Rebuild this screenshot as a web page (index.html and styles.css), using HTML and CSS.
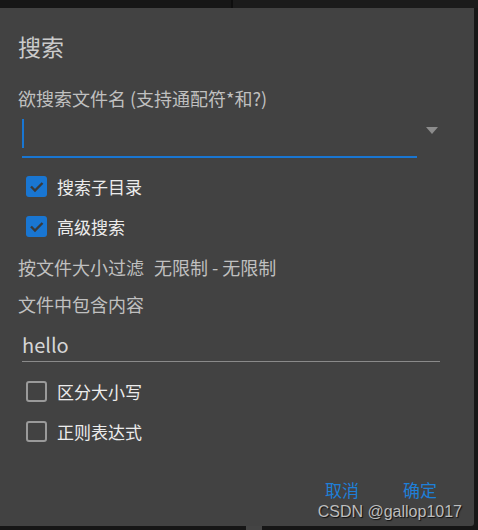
FILE: index.html
```html
<!DOCTYPE html>
<html lang="zh-CN">
<head>
  <meta charset="UTF-8">
  <title>搜索</title>
  <link rel="stylesheet" href="styles.css">
</head>
<body>
  <div class="top-strip">
    <div class="top-left"></div>
    <div class="top-right"></div>
  </div>

  <!-- Search dialog -->
  <div class="dialog">
    <div class="title">搜索</div>

    <div class="label">欲搜索文件名 (支持通配符*和?)</div>
    <div class="combo">
      <div class="combo-field"><span class="caret"></span></div>
      <div class="combo-arrow"></div>
    </div>

    <div class="check-row">
      <span class="box checked">
        <svg viewBox="0 0 21 21" width="21" height="21"><path d="M5 10.5 L9 14.5 L16.5 7" fill="none" stroke="#3a3a3a" stroke-width="2.4"/></svg>
      </span>
      <span class="check-text">搜索子目录</span>
    </div>
    <div class="check-row">
      <span class="box checked">
        <svg viewBox="0 0 21 21" width="21" height="21"><path d="M5 10.5 L9 14.5 L16.5 7" fill="none" stroke="#3a3a3a" stroke-width="2.4"/></svg>
      </span>
      <span class="check-text">高级搜索</span>
    </div>

    <div class="label size-filter">按文件大小过滤<span class="range">无限制<span class="dash">-</span>无限制</span></div>
    <div class="label content-label">文件中包含内容</div>
    <div class="text-field">hello</div>

    <div class="check-row first-plain">
      <span class="box"></span>
      <span class="check-text">区分大小写</span>
    </div>
    <div class="check-row">
      <span class="box"></span>
      <span class="check-text">正则表达式</span>
    </div>

    <div class="actions">
      <button class="btn">取消</button>
      <button class="btn">确定</button>
    </div>

    <div class="watermark">CSDN @gallop1017</div>
  </div>

  <div class="bottom-strip"><div class="bottom-tab"></div></div>
</body>
</html>
```

FILE: styles.css
```css
/* General */
body {
  margin: 0;
  background: #171717;
  font-family: "Noto Sans CJK SC", "Noto Sans", sans-serif;
  width: 478px;
  height: 530px;
  overflow: hidden;
}

.top-strip {
  display: flex;
  height: 8px;
}

.top-left {
  width: 231px;
  background: #161616;
  border-right: 2px solid #0e0e0e;
}

.top-right {
  flex: 1;
  background: #1b1b1b;
}

/* Dialog */
.dialog {
  position: relative;
  box-sizing: border-box;
  width: 474px;
  height: 518px;
  padding: 18px 0 0 18px;
  background: #424242;
  border-radius: 0 0 3px 0;
}

.title {
  height: 40px;
  line-height: 40px;
  font-size: 23px;
  color: #cbcbcb;
}

.label {
  margin-top: 20px;
  height: 24px;
  line-height: 24px;
  font-size: 18px;
  color: #c0c0c0;
}

.range {
  margin-left: 10px;
}

.dash {
  margin: 0 4px;
}

/* File name combo */
.combo {
  display: flex;
  align-items: center;
  margin-top: 6px;
  margin-left: 4px;
}

.combo-field {
  width: 395px;
  height: 40px;
  border-bottom: 2px solid #1976d2;
  display: flex;
  align-items: center;
}

.caret {
  width: 2px;
  height: 29px;
  background: #1976d2;
  margin-top: -6px;
}

.combo-arrow {
  width: 0;
  height: 0;
  margin-left: 9px;
  margin-top: -14px;
  border-left: 6px solid transparent;
  border-right: 6px solid transparent;
  border-top: 7px solid #8c8c8c;
}

/* Checkboxes */
.check-row {
  display: flex;
  align-items: center;
  height: 40px;
  padding-left: 8px;
}

.combo + .check-row {
  margin-top: 8px;
}

.box {
  box-sizing: border-box;
  width: 21px;
  height: 21px;
  border: 2px solid #9a9a9a;
  border-radius: 3px;
  display: flex;
}

.box.checked {
  border: none;
  background: #1976d2;
}

.check-text {
  margin-left: 10px;
  font-size: 17px;
  color: #ececec;
}

.size-filter {
  margin-top: 9px;
}

.content-label {
  margin-top: 13px;
}

/* Content text field */
.text-field {
  margin: 12px 0 0 4px;
  width: 418px;
  height: 33px;
  line-height: 33px;
  font-size: 20px;
  color: #d6d6d6;
  border-bottom: 1px solid #8a8a8a;
}

.first-plain {
  margin-top: 9px;
}

/* Buttons */
.actions {
  display: flex;
  justify-content: flex-end;
  gap: 44px;
  margin-top: 20px;
  padding-right: 37px;
  height: 36px;
  align-items: center;
}

.btn {
  background: none;
  border: none;
  padding: 0;
  font-family: inherit;
  font-size: 17px;
  color: #1e7fd8;
}

.watermark {
  position: absolute;
  right: 12px;
  bottom: 5px;
  font-family: "Liberation Sans", sans-serif;
  font-size: 16px;
  color: #bdbdbd;
  text-shadow: 1px 1px 1px #111;
}

.bottom-strip {
  height: 4px;
  background: #161616;
  display: flex;
}

.bottom-tab {
  margin-left: 246px;
  width: 16px;
  background: #444;
}
```
